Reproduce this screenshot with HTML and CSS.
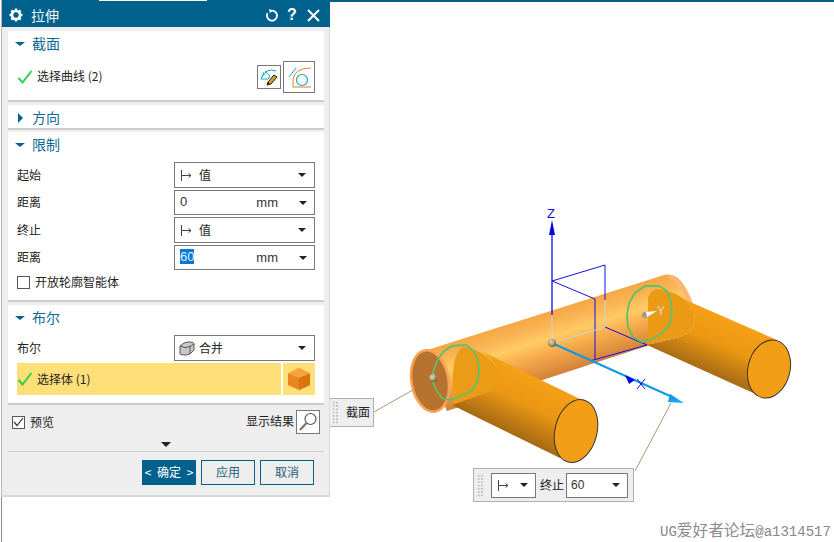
FILE: index.html
```html
<!DOCTYPE html>
<html lang="zh">
<head>
<meta charset="utf-8">
<title>拉伸</title>
<link rel="stylesheet" href="styles.css">
</head>
<body>
<div class="app">
  <svg class="scene" width="834" height="542" viewBox="0 0 834 542">
    <defs>
      <linearGradient id="mainG" gradientUnits="userSpaceOnUse" x1="535" y1="312" x2="556" y2="378">
        <stop offset="0" stop-color="#f4a23e"/><stop offset=".25" stop-color="#fab656"/><stop offset=".42" stop-color="#fecb64"/><stop offset=".62" stop-color="#f8ab4c"/><stop offset="1" stop-color="#cf7d36"/>
      </linearGradient>
      <linearGradient id="leftG" gradientUnits="userSpaceOnUse" x1="532" y1="376" x2="505" y2="432">
        <stop offset="0" stop-color="#f5a015"/><stop offset=".45" stop-color="#ea9712"/><stop offset="1" stop-color="#a46814"/>
      </linearGradient>
      <linearGradient id="rightG" gradientUnits="userSpaceOnUse" x1="725" y1="318" x2="702" y2="372">
        <stop offset="0" stop-color="#f5a015"/><stop offset=".45" stop-color="#ea9712"/><stop offset="1" stop-color="#a46814"/>
      </linearGradient>
      <radialGradient id="ball" cx=".4" cy=".35" r=".7">
        <stop offset="0" stop-color="#e8dcb8"/><stop offset=".6" stop-color="#a89870"/><stop offset="1" stop-color="#5c5238"/>
      </radialGradient>
      <linearGradient id="cyanHead" x1="0" y1="0" x2="1" y2="1">
        <stop offset="0" stop-color="#0a8fe0"/><stop offset="1" stop-color="#1fb2f5"/>
      </linearGradient>
    </defs>

    <rect class="s-dark" x="330" y="0" width="504" height="2"/>
    <rect class="s-edge" x="1" y="490" width="1" height="52"/>

    <path class="s-lead" d="M432 379 L374 412 M671 403 L635 471"/>

    <path d="M421 352 L664 275 Q676 272 684 285 Q692 297 693 306 L672 325 L650 345 L447 411 Z" fill="url(#mainG)"/>
    <path d="M672 275 Q686 284 693 306 L688 303 Q682 286 667 276 Z" fill="#fbb678"/>

    <path class="s-blue1" d="M552 281 L605 265 L605 300 M552 281 L595 299 L595 360 M590 361 L647 345 L605 327"/>
    <path class="s-gray" d="M605 300 L605 327 L552 343 M552 343 L552 315"/>
    <path class="s-blue2" d="M552 315 L552 232"/>
    <path class="s-blueF" d="M552 220 L555 235 L549 235 Z"/>
    <text class="s-z" x="547" y="218">Z</text>

    <path d="M648 340 V298 Q650 290 658 289 Q676 291 688 303 Q696 314 695 322 Q692 334 676 338 L647 345 Z" fill="#eb9a15"/>
    <path d="M681 298 L777 340 L760 396 L647 345 L676 338 Q692 334 695 322 Q696 310 681 298 Z" fill="url(#rightG)"/>
    <ellipse cx="769" cy="369" rx="21" ry="29.5" transform="rotate(14 769 369)" class="s-face"/>

    <path d="M464 347 Q490 352 499 372 Q499 392 480 395 L453 405 L453 375 Q454 350 464 347 Z" fill="#eb9c16"/>
    <path d="M473 347 L580 399 L560 458 L452 405 L478 396 Q498 392 499 372 Q492 355 473 347 Z" fill="url(#leftG)"/>
    <ellipse cx="576" cy="431" rx="21" ry="32" transform="rotate(14 576 431)" class="s-face"/>

    <ellipse cx="430" cy="381" rx="18.5" ry="31" transform="rotate(-10 430 381)" class="s-cap"/>

    <path class="s-ring" d="M433 372 L437 361 L444 351 L452 346 L466 345 L474 351 L478 362 L479 372 L477 382 L472 390 L462 396 L450 400 L442 398 L436 390 L433 382 Z"/>
    <path class="s-ring" d="M627 315 L629 303 L635 293 L645 286 L659 286 L667 291 L671 302 L672 313 L669 325 L662 333 L650 340 L642 342 L633 337 L628 327 Z"/>

    <path class="s-cyan" d="M552 343 L670 396"/>
    <path d="M670 394 L684 403 L668 402 Z" fill="url(#cyanHead)"/>
    <path class="s-blueF" d="M625 375 L635 380 L629 384 Z"/>
    <path class="s-blue1" d="M637 379 L645 389 M645 379 L637 389"/>

    <circle cx="552" cy="343" r="4" fill="url(#ball)"/>
    <circle cx="433" cy="378" r="4" fill="url(#ball)"/>
    <circle cx="645" cy="315" r="3" fill="#9a9a9a"/>
    <path d="M646 312 L657 311 L647 317 Z" fill="#fff"/>
    <text class="s-y" x="657" y="315">Y</text>
  </svg>

  <section class="panel">
    <header class="title">
      <svg class="t-gear" width="14" height="14" viewBox="0 0 14 14"><circle cx="7" cy="7" r="4" fill="none" stroke="#fff" stroke-width="2.6"/><path d="M7 0.5V2.5M7 11.5V13.5M0.5 7H2.5M11.5 7H13.5M2.4 2.4L3.8 3.8M10.2 10.2L11.6 11.6M2.4 11.6L3.8 10.2M10.2 3.8L11.6 2.4" stroke="#fff" stroke-width="2.4"/></svg>
      <span class="t-name">拉伸</span>
      <svg class="t-reset" width="13" height="13" viewBox="0 0 13 13"><path d="M6 1.6A5 5 0 1 1 1.6 4.2" fill="none" stroke="#fff" stroke-width="1.8"/><path d="M3 0L7.2 1.6L3.8 4Z" fill="#fff"/></svg>
      <span class="t-help">?</span>
      <svg class="t-close" width="13" height="13" viewBox="0 0 13 13"><path d="M1 1L12 12M12 1L1 12" stroke="#fff" stroke-width="2"/></svg>
    </header>

    <div class="card c-section">
      <div class="head"><i class="tri-down"></i><span>截面</span></div>
      <div class="sel-row">
        <svg class="check" width="16" height="14" viewBox="0 0 16 14"><path d="M1.5 8L5.5 12.5L14.5 1" fill="none" stroke="#2fd04a" stroke-width="2"/></svg>
        <span class="sel-text">选择曲线 (2)</span>
        <span class="btn-s">
          <svg width="20" height="18" viewBox="0 0 20 18"><path d="M2 10L8 3Q12 1 17 3M5 4L2 11H9L11 8L6 3" fill="none" stroke="#1aa3cc" stroke-width="1"/><path d="M9 14L15 7L18 9L12 16L8 17Z" fill="#d8a020" stroke="#222" stroke-width="1"/><path d="M8 17L9 14L11 16Z" fill="#222"/></svg>
        </span>
        <span class="btn-l">
          <svg width="24" height="24" viewBox="0 0 24 24"><path d="M2 12L9 3" fill="none" stroke="#1aa3cc" stroke-width="1"/><path d="M6 22V14Q8 3 24 3M6 22H24" fill="none" stroke="#e8801e" stroke-width="1"/><circle cx="15" cy="15" r="5.5" fill="none" stroke="#1aa3cc" stroke-width="1.2"/></svg>
        </span>
      </div>
    </div>

    <div class="card c-dir">
      <div class="head"><i class="tri-right"></i><span>方向</span></div>
    </div>

    <div class="card c-limit">
      <div class="head"><i class="tri-down"></i><span>限制</span></div>
      <div class="rows">
        <div class="row r-a"><label>起始</label>
          <div class="select"><svg class="vicon" width="13" height="13" viewBox="0 0 13 13"><path d="M1.5 1V12M1.5 6.5H11M8.5 4.5L11 6.5L8.5 8.5" fill="none" stroke="#444" stroke-width="1"/></svg><span class="val">值</span><i class="caret"></i></div></div>
        <div class="row r-b"><label>距离</label>
          <div class="select"><span class="num">0</span><span class="unit">mm</span><i class="caret"></i></div></div>
        <div class="row r-a"><label>终止</label>
          <div class="select"><svg class="vicon" width="13" height="13" viewBox="0 0 13 13"><path d="M1.5 1V12M1.5 6.5H11M8.5 4.5L11 6.5L8.5 8.5" fill="none" stroke="#444" stroke-width="1"/></svg><span class="val">值</span><i class="caret"></i></div></div>
        <div class="row r-b"><label>距离</label>
          <div class="select"><span class="num hl">60</span><span class="unit">mm</span><i class="caret"></i></div></div>
      </div>
      <div class="opt"><i class="box"></i><span>开放轮廓智能体</span></div>
    </div>

    <div class="card c-bool">
      <div class="head"><i class="tri-down"></i><span>布尔</span></div>
      <div class="row r-bool"><label>布尔</label>
        <div class="select"><svg class="vicon-b" width="16" height="17" viewBox="0 0 16 17"><path d="M1 6L5 3Q9 1 14 2.500L15 4V10L11 14Q6 16 1.500 14.500L1 14Z" fill="#c8c8c8" stroke="#555"/><path d="M1 6Q6 9 11 6.500L15 4M11 6.500V14" fill="none" stroke="#555"/></svg><span class="val">合并</span><i class="caret"></i></div></div>
      <div class="yellow">
        <div class="y-main">
          <svg class="check" width="16" height="14" viewBox="0 0 16 14"><path d="M1.500 8L5.500 12.500L14.500 1" fill="none" stroke="#2fd04a" stroke-width="2"/></svg>
          <span class="sel-text">选择体 (1)</span>
        </div>
        <div class="y-icon">
          <svg width="22" height="22" viewBox="0 0 22 22"><path d="M11 0L22 5.500V17L11 22L0 17V5.500Z" fill="#e8851c"/><path d="M11 0L22 5.500L11 10L0 5.500Z" fill="#f6a33c"/><path d="M11 10L22 5.500V17L11 22Z" fill="#d9740f"/></svg>
        </div>
      </div>
    </div>

    <div class="preview">
      <div class="p-left"><i class="box checked"><svg width="11" height="10" viewBox="0 0 11 10"><path d="M1 5L4 8.500L10 1" fill="none" stroke="#333" stroke-width="1.200"/></svg></i><span>预览</span></div>
      <div class="p-right"><span>显示结果</span>
        <span class="btn-mag"><svg width="20" height="20" viewBox="0 0 20 20"><circle cx="12.500" cy="7" r="5.500" fill="#fff" stroke="#555" stroke-width="1.200"/><path d="M8.500 11L2 18" stroke="#777" stroke-width="2.200"/></svg></span>
      </div>
    </div>
    <div class="more"><i class="caret big"></i></div>
    <div class="actions">
      <button class="primary">&lt; 确定 &gt;</button>
      <button>应用</button>
      <button>取消</button>
    </div>
  </section>

  <div class="tip tip-sec"><i class="grip"></i><span>截面</span></div>
  <div class="tip tip-end">
    <i class="grip g2"></i>
    <div class="mini m1"><svg width="13" height="13" viewBox="0 0 13 13"><path d="M1.500 1V12M1.500 6.500H11M8.500 4.500L11 6.500L8.500 8.500" fill="none" stroke="#444" stroke-width="1"/></svg><i class="caret"></i></div>
    <span class="t-lab">终止</span>
    <div class="mini m2"><span>60</span><i class="caret"></i></div>
  </div>
  <div class="mark">UG<span>爱好者论坛</span>@a1314517</div>
</div>
</body>
</html>
```
FILE: styles.css
```css
* { box-sizing: border-box; }
html, body { margin: 0; padding: 0; background: #fff; }
body { font-family: "Noto Sans CJK SC", "Noto Sans", sans-serif; font-size: 12px; color: #222; }
.app { position: relative; width: 834px; height: 542px; overflow: hidden; }
.scene { position: absolute; left: 0; top: 0; }
.s-dark { fill: #00628c; }
.s-edge { fill: #8a8a8a; }
.s-lead { fill: none; stroke: #a89878; stroke-width: 1; }
.s-blue1 { fill: none; stroke: #1010e8; stroke-width: 1; }
.s-blue2 { fill: none; stroke: #0a0ae0; stroke-width: 1.300; }
.s-blueF { fill: #0808d8; }
.s-gray { fill: none; stroke: #d0d0d0; stroke-width: 1; }
.s-z { font: 13px "Liberation Sans", sans-serif; fill: #1010e0; }
.s-y { font: 12px "Liberation Sans", sans-serif; fill: #dcdcdc; }
.s-face { fill: #f19d15; stroke: #333; stroke-width: 1; }
.s-cap { fill: #b8722f; stroke: #f9a257; stroke-width: 2.500; }
.s-ring { fill: none; stroke: #5cc26a; stroke-width: 1.800; }
.s-cyan { fill: none; stroke: #0a9ae8; stroke-width: 2; }

.panel { position: relative; width: 329px; height: 497px; margin-left: 1px; padding-left: 1px; background: #eee; border: 1px solid #d8d8d8; border-width: 0 1px 2px 1px; border-left-color: #b8b8b8; }
.title { position: relative; display: flex; align-items: center; height: 27px; margin: 0 -1px 0 -1px; padding: 3px 0 0 7px; background: #00628c; color: #fff; }
.title::before { content: ""; position: absolute; left: 97px; top: 0; width: 108px; height: 1px; background: #fff; }
.t-gear { margin-right: 8px; }
.t-name { font-size: 14px; flex: 1; color: #f2f8fb; padding-bottom: 1px; }
.t-reset { margin-right: 8px; }
.t-help { font: bold 16px "Liberation Sans", sans-serif; width: 10px; margin-right: 10px; }
.t-close { margin-right: 10px; }

.card { margin: 0 5px; background: #fff; border-bottom: 2px solid #ccc; }
.c-section { margin-top: 4px; height: 71px; }
.c-dir { margin-top: 3px; height: 25px; }
.c-limit { margin-top: 2px; height: 170px; }
.c-bool { margin-top: 3px; height: 100px; }
.head { display: flex; align-items: center; height: 26px; padding: 0 0 2px 7px; font-size: 14px; color: #0a6a94; }
.head span { margin-left: 7px; }
.c-dir .head { height: 25px; padding: 0 0 2px 7px; }
.c-dir .head span { margin-left: 6px; }
.tri-down { width: 0; height: 0; border: 4px solid transparent; border-top: 4.500px solid #00628c; border-bottom: 0; border-left-width: 5px; border-right-width: 5px; margin-top: 2px; }
.tri-right { width: 0; height: 0; margin-left: 3px; border: 5px solid transparent; border-left: 5px solid #00628c; border-right: 0; margin-right: 3px; margin-top: 2px; }

.sel-row { display: flex; align-items: center; height: 31px; margin-top: 4px; padding-left: 9px; }
.check { flex: none; }
.sel-text { margin-left: 4px; color: #222; padding-bottom: 2px; }
.btn-s { display: flex; align-items: center; justify-content: center; width: 24px; height: 24px; margin-left: auto; border: 1px solid #777; background: #fff; }
.btn-l { display: flex; align-items: center; justify-content: center; width: 32px; height: 32px; margin: 0 9px 0 2px; border: 1px solid #777; background: #fff; }

.rows { display: flex; flex-direction: column; margin-top: 4px; }
.row { display: flex; align-items: center; padding: 0 9px; }
.r-a { height: 26px; margin-bottom: 2px; }
.r-b { height: 25px; margin-bottom: 2px; }
.row label { width: 157px; font-size: 12px; color: #222; padding-bottom: 2px; }
.select { display: flex; align-items: center; width: 141px; height: 100%; padding: 0 8px 0 5px; border: 1px solid #777; background: #fff; }
.vicon { margin-right: 6px; }
.vicon-b { margin: 0 4px 0 -1px; }
.val { color: #222; font-size: 12px; padding-bottom: 2px; }
.num { font: 13px "Liberation Sans", sans-serif; color: #333; margin-top: -2px; }
.num.hl { background: #0a78d7; color: #e8f2fc; }
.unit { font: 13px "Liberation Sans", sans-serif; margin-left: auto; margin-right: 21px; color: #333; }
.caret { width: 0; height: 0; margin-left: auto; border-left: 4px solid transparent; border-right: 4px solid transparent; border-top: 4px solid #222; flex: none; }
.unit + .caret { margin-left: 0; margin-right: -1px; }
.opt { display: flex; align-items: center; height: 20px; margin-top: 0; padding-left: 9px; font-size: 12px; }
.opt span { padding-bottom: 2px; }
.box { display: flex; align-items: center; justify-content: center; width: 13px; height: 13px; margin-right: 5px; border: 1px solid #555; background: #fff; flex: none; }

.r-bool { height: 26px; margin-top: 4px; }
.yellow { display: flex; height: 32px; margin: 2px 9px 0; }
.y-main { display: flex; flex: 1; align-items: center; background: #ffdf78; }
.y-icon { display: flex; align-items: center; justify-content: center; width: 32px; margin-left: 2px; background: #ffdf78; }

.preview { display: flex; justify-content: space-between; align-items: center; height: 30px; margin-top: 2px; padding: 0 9px 0 9px; }
.p-left, .p-right { display: flex; align-items: center; }
.p-left span { padding-bottom: 2px; }
.p-right span:first-child { margin-right: 2px; padding-bottom: 3px; }
.btn-mag { display: flex; align-items: center; justify-content: center; width: 24px; height: 24px; border: 1px solid #777; background: #fff; }
.more { display: flex; justify-content: center; height: 15px; margin: 0 5px; padding-top: 5px; border-bottom: 1px solid #d0d0d0; }
.caret.big { margin: 0; border-left-width: 5px; border-right-width: 5px; border-top-width: 5px; }
.actions { display: flex; justify-content: flex-end; gap: 5px; padding: 8px 15px 0 0; }
.actions button { width: 54px; height: 25px; padding: 0 0 2px; border: 1px solid #00628c; background: #eee; color: #1f5f80; font: 12px "Noto Sans CJK SC", sans-serif; }
.actions .primary { background: #00628c; color: #fff; word-spacing: 3px; }

.tip { position: absolute; display: flex; align-items: center; background: #eee; border: 1px solid #b0b0b0; color: #222; }
.tip-sec { left: 330px; top: 398px; width: 44px; height: 29px; padding-left: 2px; border-left: 0; }
.tip-end { left: 473px; top: 468px; width: 161px; height: 34px; padding-left: 3px; }
.grip { width: 6px; height: 23px; background-image: radial-gradient(circle, #bbb 1.200px, transparent 1.300px); background-size: 3.300px 3.300px; flex: none; }
.tip-sec span { margin-left: 8px; padding-bottom: 2px; }
.mini { display: flex; align-items: center; height: 25px; padding: 0 7px 0 5px; border: 1px solid #777; background: #fff; }
.m1 { width: 45px; margin-left: 8px; }
.m2 { width: 62px; font: 12px "Liberation Sans", sans-serif; color: #333; padding-left: 4px; }
.t-lab { margin: 0 2px 0 4px; padding-bottom: 2px; }
.mark { position: absolute; left: 660px; top: 521px; font: 14px/18px "Liberation Mono", monospace; color: #888; white-space: nowrap; }
.mark span { font: 15.700px/18px "Noto Sans CJK SC", sans-serif; color: #8c8c8c; }
```
